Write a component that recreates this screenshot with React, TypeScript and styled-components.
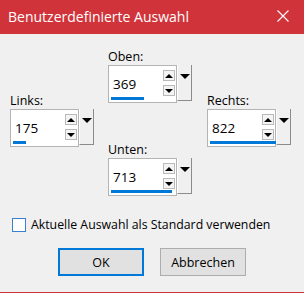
import React from 'react'
import styled, { createGlobalStyle } from 'styled-components';

const GlobalStyle = createGlobalStyle`
  html, body {
    margin: 0;
    padding: 0;
    background: #f0f0f0;
  }
  * {
    box-sizing: border-box;
  }
`;

interface SpinFieldType {
    label: string;
    value: number;
    fill: number;
    area: string;
}

const SpinField: React.FC<SpinFieldType> = ({ label, value, fill, area }) => {

    return (

        <Field area={area}>

            <FieldLabel>{label}</FieldLabel>

            <FieldRow>

                <EditBox>

                    <Value>{value}</Value>

                    <Spinners>
                        <SpinButton><ArrowUp /></SpinButton>
                        <SpinButton><ArrowDown /></SpinButton>
                    </Spinners>

                    <Progress style={{ width: `${fill}px` }} />

                </EditBox>

                <DropButton>
                    <DropArrow />
                </DropButton>

            </FieldRow>

        </Field>
    );
};

export default function App() {

    return (
        <>
            <GlobalStyle />

            <Dialog>

                <TitleBar>

                    <Title>Benutzerdefinierte Auswahl</Title>

                    <CloseIcon viewBox="0 0 12 12">
                        <path d="M0.5 0.5 L11.5 11.5 M11.5 0.5 L0.5 11.5" stroke="#fff" strokeWidth="1.1" />
                    </CloseIcon>

                </TitleBar>

                <Body>

                    <FieldGrid>
                        <SpinField label="Oben:" value={369} fill={33} area="top" />
                        <SpinField label="Links:" value={175} fill={13} area="left" />
                        <SpinField label="Rechts:" value={822} fill={66} area="right" />
                        <SpinField label="Unten:" value={713} fill={61} area="bottom" />
                    </FieldGrid>

                    <CheckRow>
                        <CheckBox />
                        <CheckText>Aktuelle Auswahl als Standard verwenden</CheckText>
                    </CheckRow>

                    <ButtonRow>
                        <Button primary>OK</Button>
                        <Button>Abbrechen</Button>
                    </ButtonRow>

                </Body>

            </Dialog>
        </>
    );
}

const Dialog = styled.div`
  width: 304px;
  height: 293px;
  background: #f0f0f0;
  border-bottom: 1px solid #d0343a;
  font-family: "Open Sans", "Noto Sans", sans-serif;
  color: #000;
  display: flex;
  flex-direction: column;
`;

const TitleBar = styled.div`
  height: 34px;
  flex-shrink: 0;
  background: #d0343a;
  display: flex;
  align-items: center;
  justify-content: space-between;
  padding: 0 15px 0 8px;
`;

const Title = styled.span`
  color: #fff;
  font-size: 14px;
  line-height: 18px;
  margin-top: -1px;
`;

const CloseIcon = styled.svg`
  width: 12px;
  height: 12px;
  margin-top: -2px;
`;

const Body = styled.div`
  padding: 15px 0 0 10px;
  display: flex;
  flex-direction: column;
`;

const FieldGrid = styled.div`
  display: grid;
  grid-template-columns: 98px 99px 98px;
  grid-template-rows: 44px 49px auto;
  grid-template-areas:
    ". top ."
    "left top right"
    "left bottom right";
`;

const Field = styled.div<{ area: string }>`
  grid-area: ${p => p.area};
  align-self: start;
  display: flex;
  flex-direction: column;
`;

const FieldLabel = styled.div`
  font-size: 12.5px;
  line-height: 16px;
`;

const FieldRow = styled.div`
  display: flex;
`;

const EditBox = styled.div`
  position: relative;
  width: 69px;
  height: 38px;
  background: #fff;
  border: 1px solid #b4b4b4;
  display: flex;
  align-items: center;
  justify-content: space-between;
  padding: 0 1px 0 4px;
`;

const Value = styled.span`
  font-size: 13.5px;
  line-height: 16px;
`;

const Spinners = styled.div`
  display: flex;
  flex-direction: column;
  gap: 4px;
  margin-top: -2px;
`;

const SpinButton = styled.div`
  width: 12px;
  height: 11px;
  border: 1px solid #b9b9b9;
  background: #f4f4f4;
  display: flex;
  align-items: center;
  justify-content: center;
`;

const ArrowUp = styled.span`
  width: 0;
  height: 0;
  border-left: 4px solid transparent;
  border-right: 4px solid transparent;
  border-bottom: 4px solid #000;
`;

const ArrowDown = styled.span`
  width: 0;
  height: 0;
  border-left: 4px solid transparent;
  border-right: 4px solid transparent;
  border-top: 4px solid #000;
`;

const Progress = styled.div`
  position: absolute;
  left: 2px;
  bottom: 2px;
  height: 3px;
  background: #0078d7;
`;

const DropButton = styled.div`
  width: 15px;
  height: 36px;
  background: #f0f0f0;
  border-right: 1px solid #8c8c8c;
  border-bottom: 1px solid #8c8c8c;
  border-left: 1px solid #fff;
  display: flex;
  justify-content: center;
  padding-top: 9px;
`;

const DropArrow = styled.span`
  width: 0;
  height: 0;
  border-left: 5px solid transparent;
  border-right: 5px solid transparent;
  border-top: 5px solid #000;
`;

const CheckRow = styled.div`
  display: flex;
  align-items: center;
  gap: 5px;
  margin-top: 21px;
  padding-left: 2px;
`;

const CheckBox = styled.div`
  width: 14px;
  height: 14px;
  background: #fff;
  border: 1px solid #3a7fd0;
`;

const CheckText = styled.span`
  font-size: 12.3px;
  line-height: 16px;
`;

const ButtonRow = styled.div`
  display: flex;
  justify-content: center;
  gap: 16px;
  margin-top: 15px;
  margin-left: -10px;
`;

const Button = styled.div<{ primary?: boolean }>`
  width: 86px;
  height: 28px;
  background: #e1e1e1;
  border: ${p => p.primary ? '2px solid #0078d7' : '1px solid #adadad'};
  display: flex;
  align-items: center;
  justify-content: center;
  font-size: 12.5px;
`;
